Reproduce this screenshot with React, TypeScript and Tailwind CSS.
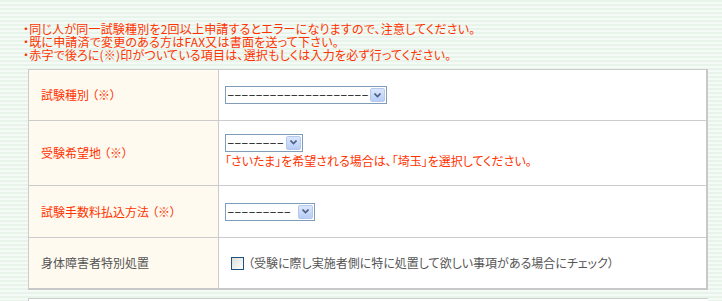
const notes = [
  '・同じ人が同一試験種別を2回以上申請するとエラーになりますので、注意してください。',
  '・既に申請済で変更のある方はFAX又は書面を送って下さい。',
  '・赤字で後ろに(※)印がついている項目は、選択もしくは入力を必ず行ってください。',
]

function Select({ width, dashes }: { width: string; dashes: string }) {
  return (
    <div className={`${width} h-[18px] flex items-center justify-between border border-[#7f9db9] bg-white pl-[2px] pr-[1px]`}>
      <span className="font-['Liberation_Sans'] text-[10px] leading-none tracking-[1.5px] text-black">{dashes}</span>
      <span className="w-[15px] h-[14px] flex items-center justify-center rounded-[2px] border border-[#b5c9ef] bg-[linear-gradient(to_bottom,#dbe6fc,#b8cdf7)]">
        <svg width="7" height="5" viewBox="0 0 7 5">
          <path d="M0.5 0.5 L3.5 3.5 L6.5 0.5" stroke="#4d6185" strokeWidth="1.6" fill="none" />
        </svg>
      </span>
    </div>
  )
}

function Label({ text, required }: { text: string; required?: boolean }) {
  return (
    <div className={`bg-[#fffaef] flex items-center pl-[12px] ${required ? 'text-[#ff3300]' : 'text-[#555555]'}`}>
      {text}
      {required && <span className="ml-[3px]">（※）</span>}
    </div>
  )
}

export default function App() {
  return (
    <div className="w-[722px] h-[301px] overflow-hidden bg-[repeating-linear-gradient(to_bottom,#e8f4ea_0px,#e8f4ea_2px,#f4faf5_2px,#f4faf5_4px)] font-['Noto_Sans_CJK_JP',sans-serif] text-[12px] [font-feature-settings:'palt']">
      <div className="pt-[22px] pl-[23px] text-[#ff3300] leading-[13px] tracking-[0.2px]">
        {notes.map((n) => (
          <p key={n}>{n}</p>
        ))}
      </div>

      <div className="ml-[28px] mt-[8px] w-[680px] border-l border-t border-[#cccccc] border-r-2 border-b-2 border-r-[#c8c8c8] border-b-[#c8c8c8]">
        <div className="grid grid-cols-[189px_1px_1fr] h-[51px] border-b border-[#cccccc]">
          <Label text="試験種別" required />
          <div className="bg-[#cccccc]" />
          <div className="bg-white flex items-center pl-[6px]">
            <Select width="w-[162px]" dashes="––––––––––––––––––––" />
          </div>
        </div>

        <div className="grid grid-cols-[189px_1px_1fr] h-[65px] border-b border-[#cccccc]">
          <Label text="受験希望地" required />
          <div className="bg-[#cccccc]" />
          <div className="bg-white flex flex-col justify-center pl-[6px] pb-[6px]">
            <Select width="w-[78px]" dashes="––––––––" />
            <p className="mt-[2px] leading-[13px] text-[#ff3300]">「さいたま」を希望される場合は、「埼玉」を選択してください。</p>
          </div>
        </div>

        <div className="grid grid-cols-[189px_1px_1fr] h-[52px] border-b border-[#cccccc]">
          <Label text="試験手数料払込方法" required />
          <div className="bg-[#cccccc]" />
          <div className="bg-white flex items-center pl-[6px]">
            <Select width="w-[90px]" dashes="–––––––––" />
          </div>
        </div>

        <div className="grid grid-cols-[189px_1px_1fr] h-[50px]">
          <Label text="身体障害者特別処置" />
          <div className="bg-[#cccccc]" />
          <div className="bg-white flex items-center pl-[12px] text-[#555555]">
            <span className="w-[13px] h-[13px] border border-[#1c5180] bg-[linear-gradient(135deg,#dcdcd7,#ffffff)]" />
            <span className="ml-[4px]">（受験に際し実施者側に特に処置して欲しい事項がある場合にチェック）</span>
          </div>
        </div>
      </div>

      <div className="ml-[28px] mt-[8px] w-[680px] h-[40px] border-l border-t border-[#cccccc] bg-white" />
    </div>
  )
}
